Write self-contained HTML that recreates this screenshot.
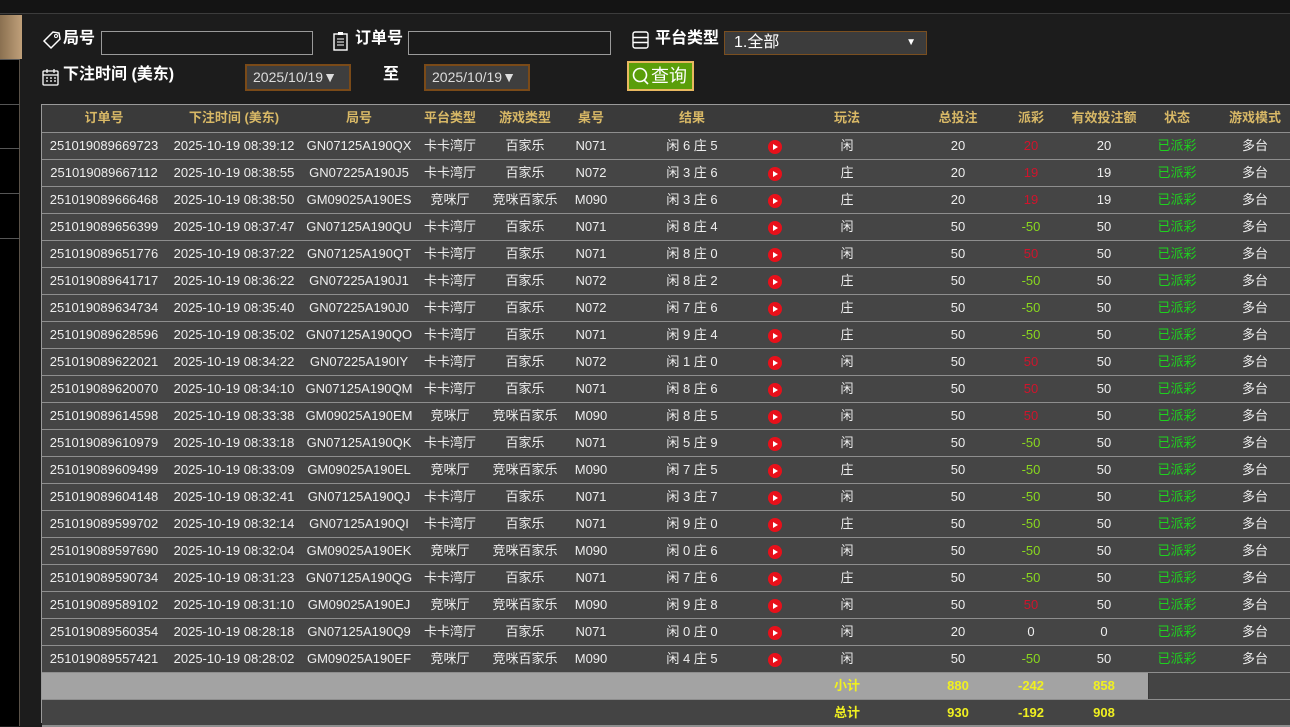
<!DOCTYPE html>
<html><head><meta charset="utf-8">
<style>
*{margin:0;padding:0;box-sizing:border-box}
body{width:1290px;height:726px;overflow:hidden;background:#1c1c1c;font-family:"Liberation Sans","Noto Sans CJK SC",sans-serif;position:relative;color:#eee}
.abs{position:absolute}
.lbl{position:absolute;color:#fff;font-weight:bold;font-size:16px;white-space:nowrap;line-height:20px}
.inp{position:absolute;border:1px solid #9a9a9a;background:#1a1a1a;height:24px}
.date{position:absolute;background:#3e3e3e;border:2px solid #7a4a18;color:#ddd;font-size:14px;height:27px;line-height:23px;padding-left:6px;width:106px}
.tbl{position:absolute;left:41px;top:104px;width:1249px;height:619px;border-left:1px solid #9a9a9a;border-top:1px solid #9a9a9a;background:#454545}
.r{position:absolute;left:0;width:1249px;height:27px;border-top:1px solid #8e8e8e;background:#454545;font-size:13px}
.r i{position:absolute;font-style:normal;top:0;line-height:26px;height:26px;transform:translateX(-50%);white-space:nowrap}
.h{background:#3a3a3a;border-top:none;color:#d8b866;font-weight:bold}
.r i:nth-child(1){left:62px}.r i:nth-child(2){left:192px}.r i:nth-child(3){left:317px}.r i:nth-child(4){left:408px}
.r i:nth-child(5){left:483px}.r i:nth-child(6){left:549px}.r i:nth-child(7){left:650px}.r i:nth-child(8){left:733px}
.r i:nth-child(9){left:805px}.r i:nth-child(10){left:916px}.r i:nth-child(11){left:989px}.r i:nth-child(12){left:1062px}
.r i:nth-child(13){left:1135px}.r i:nth-child(14){left:1213px}
.r i:nth-child(8):not(.t){width:14px;height:14px;border-radius:50%;background:#e8101a;top:7px}
.r i:nth-child(8):not(.t)::after{content:"";position:absolute;left:5px;top:4px;border-left:5px solid #fff;border-top:3px solid transparent;border-bottom:3px solid transparent}
.red{color:#d0142c}.gr{color:#8ad81e}.ok{color:#1ed21e}
.y{color:#f0f020;font-weight:bold}
</style></head><body>
<div class="abs" style="left:0;top:0;width:1290px;height:14px;background:#141414;border-bottom:1px solid #3c3c3c"></div>
<div class="abs" style="left:0;top:15px;width:20px;height:711px;background:#000;border-right:1px solid #5a5248"></div>
<div class="abs" style="left:0;top:15px;width:22px;height:44px;background:linear-gradient(90deg,#8a7050,#c0a07a)"></div>
<div class="abs" style="left:0;top:59px;width:20px;height:1px;background:#555"></div>
<div class="abs" style="left:0;top:104px;width:20px;height:1px;background:#555"></div>
<div class="abs" style="left:0;top:148px;width:20px;height:1px;background:#555"></div>
<div class="abs" style="left:0;top:193px;width:20px;height:1px;background:#555"></div>
<div class="abs" style="left:0;top:238px;width:20px;height:1px;background:#555"></div>

<svg class="abs" style="left:42px;top:30px" width="20" height="20" viewBox="0 0 20 20"><path d="M2 11 L11 2 L17 3 L18 9 L9 18 Z" fill="none" stroke="#fff" stroke-width="1.5"/><circle cx="14" cy="6" r="1.5" fill="none" stroke="#fff"/></svg>
<div class="lbl" style="left:63px;top:29px">局号</div>
<div class="inp" style="left:101px;top:31px;width:212px"></div>
<svg class="abs" style="left:332px;top:31px" width="18" height="20" viewBox="0 0 18 20"><rect x="2" y="3" width="13" height="16" fill="none" stroke="#fff" stroke-width="1.4"/><rect x="6" y="1" width="5" height="3" fill="#fff"/><path d="M5 8h7M5 11h7M5 14h7" stroke="#fff"/></svg>
<div class="lbl" style="left:355px;top:29px">订单号</div>
<div class="inp" style="left:408px;top:31px;width:203px"></div>
<svg class="abs" style="left:632px;top:31px" width="18" height="18" viewBox="0 0 18 18"><rect x="1" y="1" width="15" height="16" rx="2" fill="none" stroke="#fff" stroke-width="1.4"/><path d="M1 6.5h15M1 11.5h15" stroke="#fff" stroke-width="1.4"/></svg>
<div class="lbl" style="left:655px;top:29px">平台类型</div>
<div class="abs" style="left:724px;top:31px;width:203px;height:24px;background:#3c3c3c;border:1px solid #7a4f20;color:#fff;font-size:16px;line-height:22px;padding-left:9px">1.全部<span style="position:absolute;right:10px;top:0;font-size:10px">▼</span></div>

<svg class="abs" style="left:42px;top:68px" width="18" height="18" viewBox="0 0 18 18"><rect x="1" y="3" width="15" height="14" rx="1" fill="none" stroke="#fff" stroke-width="1.3"/><path d="M1 7h15M5 1v4M12 1v4M4 10h2M8 10h2M12 10h2M4 13h2M8 13h2M12 13h2" stroke="#fff" stroke-width="1.2"/></svg>
<div class="lbl" style="left:63px;top:65px">下注时间 (美东)</div>
<div class="date" style="left:245px;top:64px">2025/10/19▼</div>
<div class="lbl" style="left:383px;top:65px">至</div>
<div class="date" style="left:424px;top:64px">2025/10/19▼</div>
<div class="abs" style="left:627px;top:61px;width:67px;height:30px;background:#5a9e0a;border:2px solid #e8b860;color:#fff;font-size:18px;line-height:26px;padding-left:22px">查询</div>
<svg class="abs" style="left:632px;top:66px" width="18" height="20" viewBox="0 0 18 20"><circle cx="8" cy="9" r="6.5" fill="none" stroke="#fff" stroke-width="1.6"/><path d="M12 14l4 4" stroke="#fff" stroke-width="1.6"/></svg>

<div class="tbl">
<div class="r h" style="top:0"><i>订单号</i><i>下注时间 (美东)</i><i>局号</i><i>平台类型</i><i>游戏类型</i><i>桌号</i><i>结果</i><i class="t"></i><i>玩法</i><i>总投注</i><i>派彩</i><i>有效投注额</i><i>状态</i><i>游戏模式</i></div>
<div class="r" style="top:27px"><i>251019089669723</i><i>2025-10-19 08:39:12</i><i>GN07125A190QX</i><i>卡卡湾厅</i><i>百家乐</i><i>N071</i><i>闲 6 庄 5</i><i></i><i>闲</i><i>20</i><i class="red">20</i><i>20</i><i class="ok">已派彩</i><i>多台</i></div>
<div class="r" style="top:54px"><i>251019089667112</i><i>2025-10-19 08:38:55</i><i>GN07225A190J5</i><i>卡卡湾厅</i><i>百家乐</i><i>N072</i><i>闲 3 庄 6</i><i></i><i>庄</i><i>20</i><i class="red">19</i><i>19</i><i class="ok">已派彩</i><i>多台</i></div>
<div class="r" style="top:81px"><i>251019089666468</i><i>2025-10-19 08:38:50</i><i>GM09025A190ES</i><i>竞咪厅</i><i>竞咪百家乐</i><i>M090</i><i>闲 3 庄 6</i><i></i><i>庄</i><i>20</i><i class="red">19</i><i>19</i><i class="ok">已派彩</i><i>多台</i></div>
<div class="r" style="top:108px"><i>251019089656399</i><i>2025-10-19 08:37:47</i><i>GN07125A190QU</i><i>卡卡湾厅</i><i>百家乐</i><i>N071</i><i>闲 8 庄 4</i><i></i><i>闲</i><i>50</i><i class="gr">-50</i><i>50</i><i class="ok">已派彩</i><i>多台</i></div>
<div class="r" style="top:135px"><i>251019089651776</i><i>2025-10-19 08:37:22</i><i>GN07125A190QT</i><i>卡卡湾厅</i><i>百家乐</i><i>N071</i><i>闲 8 庄 0</i><i></i><i>闲</i><i>50</i><i class="red">50</i><i>50</i><i class="ok">已派彩</i><i>多台</i></div>
<div class="r" style="top:162px"><i>251019089641717</i><i>2025-10-19 08:36:22</i><i>GN07225A190J1</i><i>卡卡湾厅</i><i>百家乐</i><i>N072</i><i>闲 8 庄 2</i><i></i><i>庄</i><i>50</i><i class="gr">-50</i><i>50</i><i class="ok">已派彩</i><i>多台</i></div>
<div class="r" style="top:189px"><i>251019089634734</i><i>2025-10-19 08:35:40</i><i>GN07225A190J0</i><i>卡卡湾厅</i><i>百家乐</i><i>N072</i><i>闲 7 庄 6</i><i></i><i>庄</i><i>50</i><i class="gr">-50</i><i>50</i><i class="ok">已派彩</i><i>多台</i></div>
<div class="r" style="top:216px"><i>251019089628596</i><i>2025-10-19 08:35:02</i><i>GN07125A190QO</i><i>卡卡湾厅</i><i>百家乐</i><i>N071</i><i>闲 9 庄 4</i><i></i><i>庄</i><i>50</i><i class="gr">-50</i><i>50</i><i class="ok">已派彩</i><i>多台</i></div>
<div class="r" style="top:243px"><i>251019089622021</i><i>2025-10-19 08:34:22</i><i>GN07225A190IY</i><i>卡卡湾厅</i><i>百家乐</i><i>N072</i><i>闲 1 庄 0</i><i></i><i>闲</i><i>50</i><i class="red">50</i><i>50</i><i class="ok">已派彩</i><i>多台</i></div>
<div class="r" style="top:270px"><i>251019089620070</i><i>2025-10-19 08:34:10</i><i>GN07125A190QM</i><i>卡卡湾厅</i><i>百家乐</i><i>N071</i><i>闲 8 庄 6</i><i></i><i>闲</i><i>50</i><i class="red">50</i><i>50</i><i class="ok">已派彩</i><i>多台</i></div>
<div class="r" style="top:297px"><i>251019089614598</i><i>2025-10-19 08:33:38</i><i>GM09025A190EM</i><i>竞咪厅</i><i>竞咪百家乐</i><i>M090</i><i>闲 8 庄 5</i><i></i><i>闲</i><i>50</i><i class="red">50</i><i>50</i><i class="ok">已派彩</i><i>多台</i></div>
<div class="r" style="top:324px"><i>251019089610979</i><i>2025-10-19 08:33:18</i><i>GN07125A190QK</i><i>卡卡湾厅</i><i>百家乐</i><i>N071</i><i>闲 5 庄 9</i><i></i><i>闲</i><i>50</i><i class="gr">-50</i><i>50</i><i class="ok">已派彩</i><i>多台</i></div>
<div class="r" style="top:351px"><i>251019089609499</i><i>2025-10-19 08:33:09</i><i>GM09025A190EL</i><i>竞咪厅</i><i>竞咪百家乐</i><i>M090</i><i>闲 7 庄 5</i><i></i><i>庄</i><i>50</i><i class="gr">-50</i><i>50</i><i class="ok">已派彩</i><i>多台</i></div>
<div class="r" style="top:378px"><i>251019089604148</i><i>2025-10-19 08:32:41</i><i>GN07125A190QJ</i><i>卡卡湾厅</i><i>百家乐</i><i>N071</i><i>闲 3 庄 7</i><i></i><i>闲</i><i>50</i><i class="gr">-50</i><i>50</i><i class="ok">已派彩</i><i>多台</i></div>
<div class="r" style="top:405px"><i>251019089599702</i><i>2025-10-19 08:32:14</i><i>GN07125A190QI</i><i>卡卡湾厅</i><i>百家乐</i><i>N071</i><i>闲 9 庄 0</i><i></i><i>庄</i><i>50</i><i class="gr">-50</i><i>50</i><i class="ok">已派彩</i><i>多台</i></div>
<div class="r" style="top:432px"><i>251019089597690</i><i>2025-10-19 08:32:04</i><i>GM09025A190EK</i><i>竞咪厅</i><i>竞咪百家乐</i><i>M090</i><i>闲 0 庄 6</i><i></i><i>闲</i><i>50</i><i class="gr">-50</i><i>50</i><i class="ok">已派彩</i><i>多台</i></div>
<div class="r" style="top:459px"><i>251019089590734</i><i>2025-10-19 08:31:23</i><i>GN07125A190QG</i><i>卡卡湾厅</i><i>百家乐</i><i>N071</i><i>闲 7 庄 6</i><i></i><i>庄</i><i>50</i><i class="gr">-50</i><i>50</i><i class="ok">已派彩</i><i>多台</i></div>
<div class="r" style="top:486px"><i>251019089589102</i><i>2025-10-19 08:31:10</i><i>GM09025A190EJ</i><i>竞咪厅</i><i>竞咪百家乐</i><i>M090</i><i>闲 9 庄 8</i><i></i><i>闲</i><i>50</i><i class="red">50</i><i>50</i><i class="ok">已派彩</i><i>多台</i></div>
<div class="r" style="top:513px"><i>251019089560354</i><i>2025-10-19 08:28:18</i><i>GN07125A190Q9</i><i>卡卡湾厅</i><i>百家乐</i><i>N071</i><i>闲 0 庄 0</i><i></i><i>闲</i><i>20</i><i>0</i><i>0</i><i class="ok">已派彩</i><i>多台</i></div>
<div class="r" style="top:540px"><i>251019089557421</i><i>2025-10-19 08:28:02</i><i>GM09025A190EF</i><i>竞咪厅</i><i>竞咪百家乐</i><i>M090</i><i>闲 4 庄 5</i><i></i><i>闲</i><i>50</i><i class="gr">-50</i><i>50</i><i class="ok">已派彩</i><i>多台</i></div>
<div class="r" style="top:567px;background:linear-gradient(90deg,#a3a3a3 0,#a3a3a3 1106px,#3a3a3a 1106px,#3a3a3a 1107px,#444 1107px)"><i class="y" style="left:805px">小计</i><i class="y" style="left:916px">880</i><i class="y" style="left:989px">-242</i><i class="y" style="left:1062px">858</i></div>
<div class="r" style="top:594px;background:#444;border-bottom:2px solid #8e8e8e;height:28px"><i class="y" style="left:805px">总计</i><i class="y" style="left:916px">930</i><i class="y" style="left:989px">-192</i><i class="y" style="left:1062px">908</i></div>
</div>
</body></html>
